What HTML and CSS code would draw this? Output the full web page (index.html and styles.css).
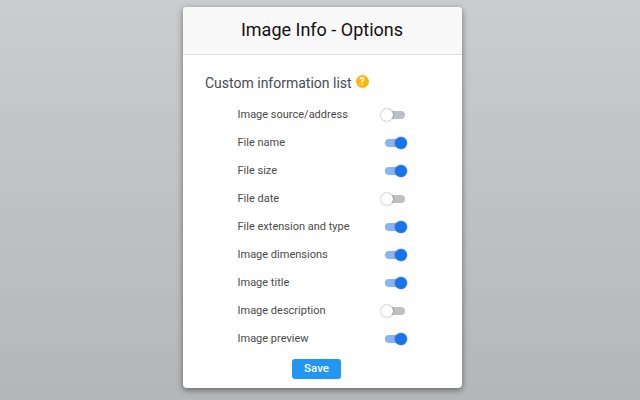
FILE: index.html
```html
<!DOCTYPE html>
<html lang="en">

<head>
    <meta charset="UTF-8">
    <title>Image Info - Options</title>
    <link rel="stylesheet" href="styles.css">
</head>

<body>
    <div class="card">
        <div class="card-header">Image Info - Options</div>
        <div class="card-body">
            <h2 class="list-title">Custom information list <span class="help">?</span></h2>
            <div class="row"><span class="row-label">Image source/address</span><span class="toggle"></span></div>
            <div class="row"><span class="row-label">File name</span><span class="toggle on"></span></div>
            <div class="row"><span class="row-label">File size</span><span class="toggle on"></span></div>
            <div class="row"><span class="row-label">File date</span><span class="toggle"></span></div>
            <div class="row"><span class="row-label">File extension and type</span><span class="toggle on"></span></div>
            <div class="row"><span class="row-label">Image dimensions</span><span class="toggle on"></span></div>
            <div class="row"><span class="row-label">Image title</span><span class="toggle on"></span></div>
            <div class="row"><span class="row-label">Image description</span><span class="toggle"></span></div>
            <div class="row"><span class="row-label">Image preview</span><span class="toggle on"></span></div>
            <button class="save">Save</button>
        </div>
    </div>
</body>

</html>
```
FILE: styles.css
```css
html, body {
    height: 100%;
}

body {
    margin: 0;
    font-family: Roboto, sans-serif;
    background: linear-gradient(#cbccd0, #b4b6b9);
    overflow: hidden;
}

.card {
    box-sizing: border-box;
    width: 279px;
    height: 381px;
    margin: 7px 0 0 183px;
    background-color: #fff;
    border-radius: 4px;
    box-shadow: 0 2px 6px rgba(0, 0, 0, 0.45);
    overflow: hidden;
}

.card-header {
    height: 47px;
    padding-right: 1px;
    line-height: 46px;
    text-align: center;
    font-size: 18px;
    color: #111;
    background-color: #f9f9f9;
    border-bottom: 1px solid #dedede;
}

.card-body {
    padding: 18px 0 0 22px;
}

.list-title {
    display: flex;
    align-items: center;
    gap: 4px;
    margin: 0 0 8px;
    height: 20px;
    font-size: 14px;
    font-weight: 400;
    color: #444b55;
}

.help {
    width: 13px;
    height: 13px;
    margin-top: -3px;
    border-radius: 50%;
    background-color: #fbb80f;
    color: #fff;
    font-size: 10px;
    font-weight: 700;
    line-height: 13px;
    text-align: center;
}

.row {
    display: flex;
    align-items: center;
    height: 28px;
    padding-left: 32.5px;
    font-size: 11px;
    color: #4a4a4a;
}

.row-label {
    width: 142.5px;
    padding-bottom: 2px;
}

.toggle {
    position: relative;
    width: 20px;
    height: 8px;
    margin-left: 5px;
    border-radius: 4px;
    background-color: #bdc1c6;
}

.toggle::after {
    content: "";
    position: absolute;
    top: -2px;
    left: -4px;
    box-sizing: border-box;
    width: 12px;
    height: 12px;
    border-radius: 50%;
    background-color: #fff;
    box-shadow: 0 0 2px rgba(0, 0, 0, 0.5);
}

.toggle.on {
    background-color: #8ab4f8;
}

.toggle.on::after {
    left: 10px;
    background-color: #1a73e8;
}

.save {
    display: block;
    width: 49px;
    height: 20px;
    margin: 6px 0 0 87px;
    padding: 0 0 2px;
    border: none;
    border-radius: 3px;
    background-color: #2196f3;
    color: #fff;
    font-family: Roboto, sans-serif;
    font-size: 11.5px;
    font-weight: 500;
}
```
